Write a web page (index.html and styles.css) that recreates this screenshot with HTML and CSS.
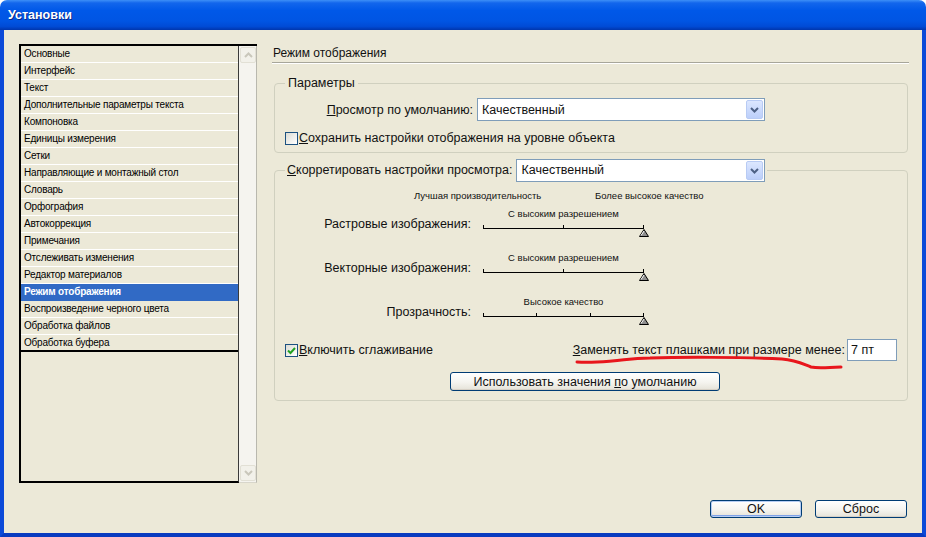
FILE: index.html
```html
<!DOCTYPE html>
<html lang="ru">
<head>
    <meta charset="UTF-8">
    <meta name="viewport" content="width=device-width, initial-scale=1.0">
    <title>Установки</title>
    <link rel="stylesheet" href="styles.css">
</head>

<body>
    <div class="window">
        <div class="titlebar">Установки</div>

        <div class="client">
            <div class="main">
                <!-- список разделов -->
                <div class="sidebar">
                    <div class="cat-pane">
                        <ul class="cat-list">
                            <li>Основные</li>
                            <li>Интерфейс</li>
                            <li>Текст</li>
                            <li>Дополнительные параметры текста</li>
                            <li>Компоновка</li>
                            <li>Единицы измерения</li>
                            <li>Сетки</li>
                            <li>Направляющие и монтажный стол</li>
                            <li>Словарь</li>
                            <li>Орфография</li>
                            <li>Автокоррекция</li>
                            <li>Примечания</li>
                            <li>Отслеживать изменения</li>
                            <li>Редактор материалов</li>
                            <li class="active">Режим отображения</li>
                            <li>Воспроизведение черного цвета</li>
                            <li>Обработка файлов</li>
                            <li>Обработка буфера</li>
                        </ul>
                    </div>
                    <div class="scrollbar">
                        <div class="sb-btn">
                            <svg width="9" height="6" viewBox="0 0 9 6"><path d="M1 5 L4.5 1.5 L8 5" fill="none" stroke="#c9c7bb" stroke-width="2"/></svg>
                        </div>
                        <div class="sb-btn">
                            <svg width="9" height="6" viewBox="0 0 9 6"><path d="M1 1 L4.5 4.5 L8 1" fill="none" stroke="#c9c7bb" stroke-width="2"/></svg>
                        </div>
                    </div>
                </div>

                <!-- режим отображения -->
                <div class="panel">
                    <div class="panel-title">Режим отображения</div>

                    <fieldset class="group group-params">
                        <legend>Параметры</legend>
                        <div class="field-row">
                            <label class="field-label"><u>П</u>росмотр по умолчанию:</label>
                            <div class="combo combo-default">
                                <span class="combo-text">Качественный</span>
                                <span class="combo-btn"><svg width="9" height="6" viewBox="0 0 9 6"><path d="M1 1 L4.5 4.5 L8 1" fill="none" stroke="#4d6185" stroke-width="2"/></svg></span>
                            </div>
                        </div>
                        <label class="check-row"><span class="checkbox"></span><u>С</u>охранить настройки отображения на уровне объекта</label>
                    </fieldset>

                    <fieldset class="group group-view">
                        <legend>
                            <span><u>С</u>корретировать настройки просмотра:</span>
                            <div class="combo combo-view">
                                <span class="combo-text">Качественный</span>
                                <span class="combo-btn"><svg width="9" height="6" viewBox="0 0 9 6"><path d="M1 1 L4.5 4.5 L8 1" fill="none" stroke="#4d6185" stroke-width="2"/></svg></span>
                            </div>
                        </legend>

                        <div class="scale-head">
                            <span>Лучшая производительность</span>
                            <span>Более высокое качество</span>
                        </div>

                        <div class="sliders">
                            <div class="slider-label">Растровые изображения:</div>
                            <div class="slider">
                                <div class="slider-caption">С высоким разрешением</div>
                                <div class="track"><i></i><i></i><i></i>
                                    <svg class="thumb" width="10" height="8" viewBox="0 0 10 8"><path d="M5 0.5 L9.5 7.5 L0.5 7.5 Z" fill="#8e8e8e" stroke="#000" stroke-width="1"/><path d="M5 2 L2 6.5" stroke="#fff" stroke-width="1"/></svg>
                                </div>
                            </div>

                            <div class="slider-label">Векторные изображения:</div>
                            <div class="slider">
                                <div class="slider-caption">С высоким разрешением</div>
                                <div class="track"><i></i><i></i><i></i>
                                    <svg class="thumb" width="10" height="8" viewBox="0 0 10 8"><path d="M5 0.5 L9.5 7.5 L0.5 7.5 Z" fill="#8e8e8e" stroke="#000" stroke-width="1"/><path d="M5 2 L2 6.5" stroke="#fff" stroke-width="1"/></svg>
                                </div>
                            </div>

                            <div class="slider-label">Прозрачность:</div>
                            <div class="slider">
                                <div class="slider-caption">Высокое качество</div>
                                <div class="track"><i></i><i></i><i></i><i></i>
                                    <svg class="thumb" width="10" height="8" viewBox="0 0 10 8"><path d="M5 0.5 L9.5 7.5 L0.5 7.5 Z" fill="#8e8e8e" stroke="#000" stroke-width="1"/><path d="M5 2 L2 6.5" stroke="#fff" stroke-width="1"/></svg>
                                </div>
                            </div>
                        </div>

                        <div class="bottom-row">
                            <label class="check-row check-aa">
                                <span class="checkbox"><svg width="11" height="11" viewBox="0 0 11 11"><path d="M2 5.5 L4.5 8 L9 3" fill="none" stroke="#21a121" stroke-width="2"/></svg></span><u>В</u>ключить сглаживание
                            </label>
                            <div class="greek-field">
                                <label><u>З</u>аменять текст плашками при размере менее:</label>
                                <div class="text-input">7 пт</div>
                            </div>
                        </div>

                        <button class="btn btn-wide">Использовать значения <u>п</u>о умолчанию</button>
                    </fieldset>
                </div>
            </div>

            <div class="footer">
                <button class="btn btn-default">OK</button>
                <button class="btn">Сброс</button>
            </div>
        </div>

        <!-- пометка красным -->
        <svg class="mark" width="926" height="537" viewBox="0 0 926 537">
            <path d="M577 362 C590 363 600 362 612 361 C625 360 632 358 650 358 C680 357 740 357 782 359 C796 360 803 364 811 367 C820 369 830 367 841 367" fill="none" stroke="#e8161c" stroke-width="3" stroke-linecap="round"/>
        </svg>
    </div>
</body>
</html>
```

FILE: styles.css
```css
* { box-sizing: border-box; }
body { margin: 0; background: #fff; font-family: "Liberation Sans", Arial, sans-serif; color: #111; }

/* окно */
.window { position: relative; width: 926px; height: 537px; display: flex; flex-direction: column; }
.titlebar {
    height: 30px;
    flex: none;
    padding: 0 8px;
    line-height: 30px;
    color: #fff;
    font-size: 12.5px;
    font-weight: bold;
    text-shadow: 1px 1px 0 #0b2a8a;
    border-radius: 7px 7px 0 0;
    background: linear-gradient(to bottom, #3d8ff7 0%, #1266ec 10%, #0058e8 35%, #0055e3 70%, #004bd6 88%, #0036ad 100%);
}
.client {
    flex: 1;
    display: flex;
    flex-direction: column;
    padding: 14px 15px 15px;
    background: #ece9d8;
    border: 4px solid #0b4ad8;
    border-top: 0;
    border-bottom-color: #083bc0;
}
.main { flex: 1; display: flex; gap: 15px; min-height: 0; }

/* список разделов */
.sidebar {
    width: 238px;
    height: 439px;
    flex: none;
    display: flex;
    border-top: 2px solid #000;
    border-left: 2px solid #000;
}
.cat-pane { flex: 1; border-right: 1px solid #3a3a3a; border-bottom: 2px solid #000; }
.cat-list { list-style: none; margin: 0; padding: 0; font-size: 10px; letter-spacing: -0.2px; }
.cat-list li {
    height: 17px;
    line-height: 16px;
    padding-left: 3px;
    border-bottom: 1px solid #fff;
    white-space: nowrap;
    color: #000;
}
.cat-list li:last-child { border-bottom: 2px solid #000; }
.cat-list li.active { background: #316ac5; color: #fff; font-weight: bold; border-bottom-color: #316ac5; }
.scrollbar {
    width: 18px;
    display: flex;
    flex-direction: column;
    justify-content: space-between;
    background: #f5f4ef;
    border-right: 1px solid #b9b8ae;
    border-bottom: 1px solid #d8d6cb;
    padding: 1px 0 1px 1px;
}
.sb-btn {
    width: 16px;
    height: 16px;
    display: flex;
    align-items: center;
    justify-content: center;
    background: #f2f1ea;
    border: 1px solid #e2e0d5;
    border-radius: 2px;
}

/* правая часть */
.panel { flex: 1; display: flex; flex-direction: column; padding-top: 1px; margin-right: -2px; min-width: 0; }
.panel-title {
    font-size: 12px;
    line-height: 17px;
    padding-left: 1px;
    border-bottom: 1px solid #a7a69a;
    box-shadow: 0 1px 0 #fff;
}
.group {
    margin: 13px 1px 0 2px;
    padding: 7px 10px 6px;
    border: 1px solid #d0d0bf;
    border-radius: 4px;
    min-width: 0;
    font-size: 12.5px;
}
.group legend { padding: 0 3px; line-height: 15px; }
.group-view { margin-top: 6px; padding-top: 8px; padding-bottom: 9px; }
.group-view legend { display: flex; align-items: center; gap: 4px; padding: 0 2px; }

.field-row { display: grid; grid-template-columns: 188px 288px; column-gap: 4px; align-items: center; }
.field-label { text-align: right; }

.combo {
    display: flex;
    align-items: center;
    height: 23px;
    padding: 1px;
    background: #fff;
    border: 1px solid #7f9db9;
    font-size: 12.5px;
}
.combo-text { flex: 1; padding-left: 3px; }
.combo-btn {
    width: 17px;
    height: 19px;
    display: flex;
    align-items: center;
    justify-content: center;
    border: 1px solid #b8cbf4;
    border-radius: 2px;
    background: linear-gradient(to bottom, #dce7ff, #bccffa);
}
.combo-default { width: 288px; }
.combo-view { width: 249px; }

.check-row { display: flex; align-items: center; line-height: 15px; margin-top: 10px; }
.checkbox {
    width: 13px;
    height: 13px;
    margin-right: 1px;
    display: inline-flex;
    align-items: center;
    justify-content: center;
    border: 1px solid #1c5180;
    background: linear-gradient(135deg, #dcdcd4, #ffffff);
}

/* шкалы */
.scale-head {
    display: grid;
    grid-template-columns: 181px auto;
    padding-left: 129px;
    font-size: 9.5px;
    line-height: 12px;
}
.sliders {
    display: grid;
    grid-template-columns: 186px 161px;
    grid-auto-rows: 44px;
    column-gap: 12px;
    margin-top: 6px;
}
.slider-label { text-align: right; padding-top: 9px; line-height: 15px; }
.slider-caption { text-align: center; font-size: 9.5px; line-height: 12px; }
.track {
    position: relative;
    height: 9px;
    display: flex;
    justify-content: space-between;
    align-items: flex-end;
    border-bottom: 1px solid #000;
}
.track i { display: block; width: 1px; height: 3px; background: #000; }
.thumb { position: absolute; right: -5px; top: 9px; }

.bottom-row {
    display: flex;
    justify-content: space-between;
    align-items: center;
    height: 22px;
    margin-top: -1px;
}
.check-aa { margin-top: 0; }
.greek-field { display: flex; align-items: center; gap: 2px; }
.text-input {
    width: 50px;
    height: 22px;
    padding-left: 3px;
    line-height: 20px;
    background: #fff;
    border: 1px solid #7f9db9;
}

/* кнопки */
.btn {
    height: 18px;
    padding: 0;
    font-family: "Liberation Sans", Arial, sans-serif;
    font-size: 12.5px;
    line-height: 16px;
    color: #111;
    border: 1px solid #003c74;
    border-radius: 3px;
    background: linear-gradient(to bottom, #ffffff 0%, #f5f4ef 55%, #e5e2d8 100%);
    box-shadow: inset 0 -1px 0 #d6d0c5;
}
.btn-wide { display: block; width: 270px; height: 19px; margin: 11px 0 0 165px; }
.footer { display: flex; justify-content: flex-end; gap: 13px; flex: none; }
.footer .btn { width: 92px; }
.btn-default { box-shadow: inset 0 0 0 1px #b6cdf3, inset 0 -2px 0 #7fa2e8; }

.mark { position: absolute; left: 0; top: 0; pointer-events: none; }
```
